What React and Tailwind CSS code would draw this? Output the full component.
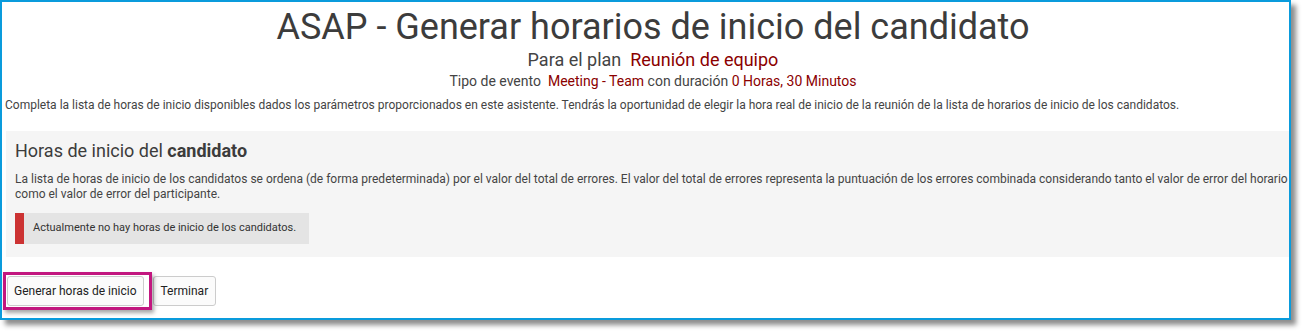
import React from 'react';

const Highlight = ({ children }) => (
  <div className="relative">
    {children}
    <div className="pointer-events-none absolute -left-[4px] -top-[4px] -bottom-[4px] -right-[8px] border-[3px] border-[#c2177f] shadow-[2px_3px_4px_rgba(0,0,0,0.35)]" />
  </div>
);

export default function App() {
  return (
    <div className="w-[1305px] h-[333px] bg-white font-['Roboto','Liberation_Sans',sans-serif]">
      <div className="w-[1291px] h-[320px] border-2 border-[#0a9bdc] bg-white overflow-hidden shadow-[5px_5px_5px_rgba(0,0,0,0.45)]">
        <div className="w-[1302px] pt-[5px] px-[3px] text-[#444]">
          <h1 className="text-center text-[36px] leading-[40px] text-[#3c3c3c]">
            ASAP - Generar horarios de inicio del candidato
          </h1>
          <div className="mt-[2px] text-center text-[18px] leading-[22px]">
            Para el plan&nbsp; <span className="text-[#8b0000]">Reunión de equipo</span>
          </div>
          <div className="text-center text-[14px] leading-[20px]">
            Tipo de evento&nbsp; <span className="text-[#8b0000]">Meeting - Team</span> con duración{' '}
            <span className="text-[#8b0000]">0 Horas, 30 Minutos</span>
          </div>
          <p className="mt-[6px] text-[12px] leading-[17px]">
            Completa la lista de horas de inicio disponibles dados los parámetros proporcionados en este asistente. Tendrás la oportunidad de elegir la hora real de inicio de la reunión de la lista de horarios de inicio de los candidatos.
          </p>

          <div className="mt-[17px] ml-[1px] bg-[#f5f5f5] px-[9px] pt-[9px] pb-[13px]">
            <h2 className="text-[18px] leading-[22px] text-[#3c3c3c]">
              Horas de inicio del <b className="font-bold">candidato</b>
            </h2>
            <p className="mt-[10px] text-[12px] leading-[15px]">
              <span className="block whitespace-nowrap">
                La lista de horas de inicio de los candidatos se ordena (de forma predeterminada) por el valor del total de errores. El valor del total de errores representa la puntuación de los errores combinada considerando tanto el valor de error del horario
              </span>
              <span className="block whitespace-nowrap">como el valor de error del participante.</span>
            </p>
            <div className="mt-[11px] flex w-[294px] h-[31px] bg-[#e4e4e4]">
              <div className="w-[9px] bg-[#cc3333]" />
              <div className="flex items-center pl-[9px] text-[11px] text-[#333]">
                Actualmente no hay horas de inicio de los candidatos.
              </div>
            </div>
          </div>

          <div className="mt-[19px] ml-[2px] flex gap-[9px]">
            <Highlight>
              <button className="h-[30px] px-[6px] rounded-[3px] border border-[#ccc] bg-[#fbfbfb] text-[12px] text-[#222]">
                Generar horas de inicio
              </button>
            </Highlight>
            <button className="h-[30px] px-[7px] rounded-[3px] border border-[#ccc] bg-[#fbfbfb] text-[12px] text-[#222]">
              Terminar
            </button>
          </div>
        </div>
      </div>
    </div>
  );
}
